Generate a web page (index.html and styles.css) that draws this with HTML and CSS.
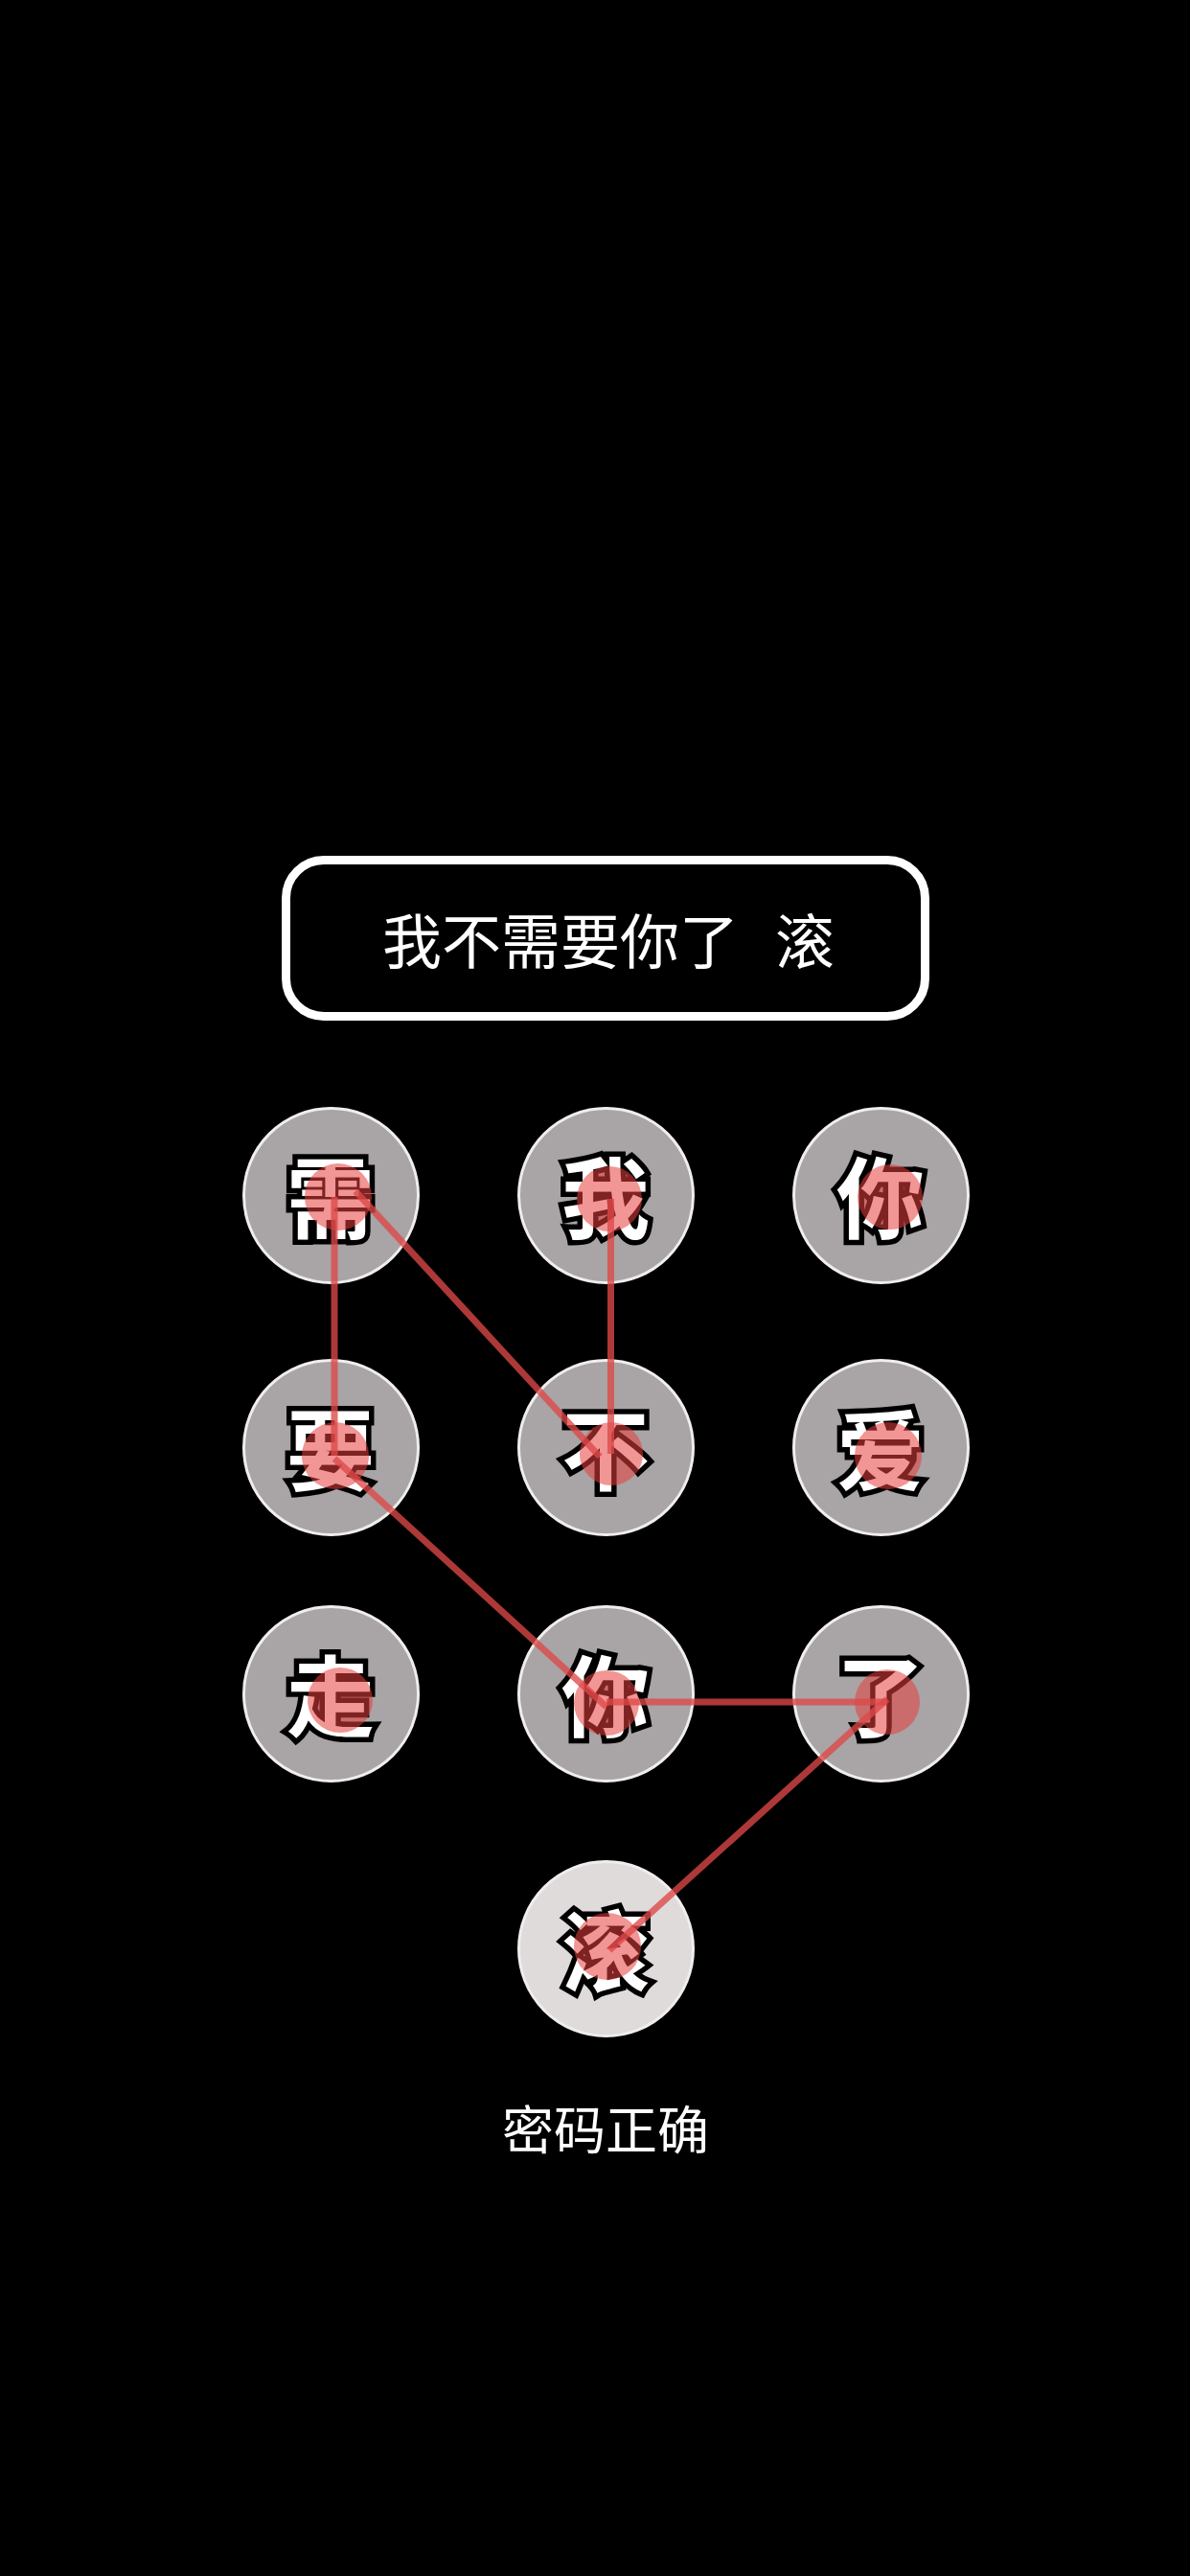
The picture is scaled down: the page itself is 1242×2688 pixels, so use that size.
FILE: index.html
```html
<!DOCTYPE html>
<html lang="zh-CN">
<head>
<meta charset="utf-8">
<title>密码正确</title>
<link rel="stylesheet" href="styles.css">
</head>
<body>
<div class="screen">
  <div class="title-box"><span class="title-text">我不需要你了<span class="gap"> </span>滚</span></div>

  <div class="pattern">
    <div class="row">
      <div class="node"><span class="ch">需</span></div>
      <div class="node"><span class="ch">我</span></div>
      <div class="node"><span class="ch">你</span></div>
    </div>
    <div class="row row-2">
      <div class="node"><span class="ch">要</span></div>
      <div class="node"><span class="ch">不</span></div>
      <div class="node"><span class="ch">爱</span></div>
    </div>
    <div class="row row-3">
      <div class="node"><span class="ch">走</span></div>
      <div class="node"><span class="ch">你</span></div>
      <div class="node"><span class="ch">了</span></div>
    </div>
    <div class="row row-4">
      <div class="node node-final"><span class="ch">滚</span></div>
    </div>

    <svg class="overlay" viewBox="0 0 759 971" preserveAspectRatio="none" aria-hidden="true">
      <g class="dots">
        <circle cx="100" cy="94" r="35"/>
        <circle cx="383" cy="96" r="34"/>
        <circle cx="676" cy="94" r="34"/>
        <circle cx="97" cy="364" r="35"/>
        <circle cx="385" cy="362" r="33"/>
        <circle cx="674" cy="364" r="35"/>
        <circle cx="102" cy="619" r="34"/>
        <circle cx="380" cy="622" r="34"/>
        <circle cx="673" cy="621" r="34"/>
        <circle cx="381" cy="876" r="35"/>
      </g>
      <g class="lines">
        <line x1="384.5" y1="96" x2="384.5" y2="362"/>
        <line x1="118" y1="88" x2="373" y2="365"/>
        <line x1="96" y1="94" x2="96" y2="364"/>
        <line x1="96" y1="367" x2="380" y2="626"/>
        <line x1="380" y1="621" x2="673" y2="621"/>
        <line x1="673" y1="618" x2="383" y2="880"/>
      </g>
    </svg>
  </div>

  <div class="status">密码正确</div>
</div>
</body>
</html>
```

FILE: styles.css
```css
html, body {
  margin: 0;
  padding: 0;
  background: #000;
}

body {
  width: 1242px;
  height: 2688px;
  overflow: hidden;
  font-family: "Noto Sans CJK SC", "Noto Sans", sans-serif;
  color: #fff;
}

.screen {
  display: flex;
  flex-direction: column;
  align-items: center;
  padding-left: 22px;
  box-sizing: border-box;
  width: 1242px;
}

.title-box {
  margin-top: 893px;
  width: 676px;
  height: 172px;
  box-sizing: border-box;
  border: 9px solid #fff;
  border-radius: 44px;
  display: flex;
  align-items: center;
  justify-content: center;
}

.title-text {
  font-size: 62px;
  line-height: 1;
  font-weight: 400;
  letter-spacing: 0;
  padding-left: 6px;
}

.gap {
  display: inline-block;
  width: 38px;
}

.pattern {
  position: relative;
  margin-top: 90px;
  width: 759px;
  display: flex;
  flex-direction: column;
}

.row {
  display: flex;
  justify-content: space-between;
}

.row-2 { margin-top: 78px; }
.row-3 { margin-top: 72px; }
.row-4 { margin-top: 81px; justify-content: center; }

.node {
  width: 185px;
  height: 185px;
  box-sizing: border-box;
  border-radius: 50%;
  border: 3px solid #efeded;
  background: #a9a4a5;
  display: flex;
  align-items: center;
  justify-content: center;
}

.node-final {
  background: #e0dbdb;
}

.ch {
  font-size: 92px;
  line-height: 1;
  font-weight: 700;
  color: #fff;
  -webkit-text-stroke: 11px #000;
  paint-order: stroke fill;
  margin-top: -5px;
}

.overlay {
  position: absolute;
  left: 0;
  top: 0;
  width: 100%;
  height: 100%;
  pointer-events: none;
}

.dots circle {
  fill: rgb(230, 62, 62);
  fill-opacity: 0.55;
}

.lines line {
  stroke: rgb(222, 72, 72);
  stroke-opacity: 0.78;
  stroke-width: 7;
  stroke-linecap: butt;
}

.status {
  margin-top: 62px;
  font-size: 54px;
  line-height: 1.2;
  font-weight: 400;
  letter-spacing: 0;
}
```
